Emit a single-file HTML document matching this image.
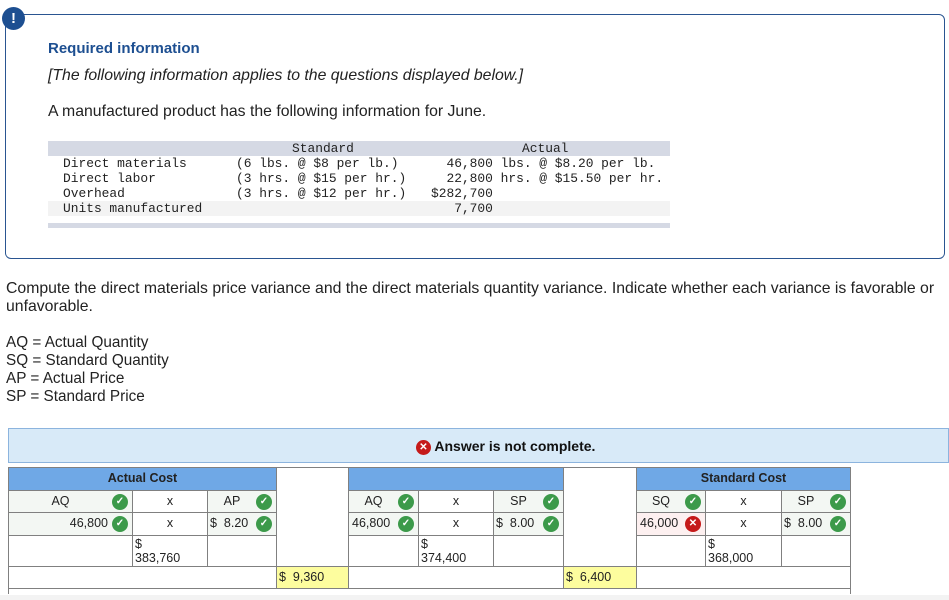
<!DOCTYPE html>
<html><head><style>
body{margin:0;width:949px;height:600px;background:#fff;position:relative;overflow:hidden;font-family:"Liberation Sans",Arial,sans-serif;color:#222}
.a{position:absolute}
.box{left:5px;top:14px;width:938px;height:243px;border:1px solid #2a5591;border-radius:6px}
.bang{left:2px;top:7px;width:23px;height:23px;border-radius:50%;background:#1d4f91;color:#fff;font-weight:bold;font-size:15px;text-align:center;line-height:23px}
.mono{font-family:"Liberation Mono",monospace;font-size:12.9px;white-space:pre;color:#222}
.t{font-size:15.8px;color:#222}
.c{position:absolute;border:1px solid #808080;box-sizing:border-box;font-size:12.5px;line-height:20px}
.hd{background:#6fa8e6;font-weight:bold;text-align:center;color:#222}
.lg{background:#f3f7f3}
.ck{display:inline-block;width:16px;height:16px;border-radius:50%;background:#3c9a4a;color:#fff;font-size:10px;line-height:16px;text-align:center;font-weight:bold;vertical-align:middle;position:absolute;right:4px;top:3px}
.x{background:#c51a1a}
.y{background:#fdfd9e}
</style></head><body>
<div class="a box"></div>
<div class="a bang">!</div>
<div class="a" style="left:48px;top:40px;font-size:15px;font-weight:bold;color:#1d4f91">Required information</div>
<div class="a t" style="left:48px;top:67px;font-style:italic">[The following information applies to the questions displayed below.]</div>
<div class="a t" style="left:48px;top:103px">A manufactured product has the following information for June.</div>
<div class="a" style="left:48px;top:141px;width:622px;height:15px;background:#d5d9e4"></div>
<div class="a" style="left:48px;top:201px;width:622px;height:15px;background:#f3f3f3"></div>
<div class="a" style="left:48px;top:223px;width:622px;height:5px;background:#d5d9e4"></div>
<div class="a mono" style="left:292px;top:141px">Standard</div>
<div class="a mono" style="left:522px;top:141px">Actual</div>
<div class="a mono" style="left:63px;top:156px;line-height:15px">Direct materials
Direct labor
Overhead
Units manufactured</div>
<div class="a mono" style="left:236px;top:156px;line-height:15px">(6 lbs. @ $8 per lb.)
(3 hrs. @ $15 per hr.)
(3 hrs. @ $12 per hr.)</div>
<div class="a mono" style="left:431px;top:156px;line-height:15px">  46,800 lbs. @ $8.20 per lb.
  22,800 hrs. @ $15.50 per hr.
$282,700
   7,700</div>
<div class="a t" style="left:6px;top:280px;width:935px;line-height:18px">Compute the direct materials price variance and the direct materials quantity variance. Indicate whether each variance is favorable or unfavorable.</div>
<div class="a t" style="left:6px;top:334px;line-height:18px;font-size:15.3px">AQ = Actual Quantity<br>SQ = Standard Quantity<br>AP = Actual Price<br>SP = Standard Price</div>
<div class="a" style="left:8px;top:428px;width:941px;height:35px;background:#d8eaf8;border:1px solid #8cb4de;box-sizing:border-box"></div>
<div class="a" style="left:416px;top:438px;font-size:14px;font-weight:bold;color:#111"><span style="display:inline-block;width:15px;height:15px;border-radius:50%;background:#c51a1a;color:#fff;font-size:10px;line-height:15px;text-align:center;vertical-align:1px">✕</span> Answer is not complete.</div>

<div class="c hd" style="left:8px;top:467px;width:269px;height:24px">Actual Cost</div>
<div class="c" style="left:276px;top:467px;width:73px;height:100px"></div>
<div class="c hd" style="left:348px;top:467px;width:216px;height:24px"></div>
<div class="c" style="left:563px;top:467px;width:74px;height:100px"></div>
<div class="c hd" style="left:636px;top:467px;width:215px;height:24px">Standard Cost</div>

<div class="c lg" style="left:8px;top:490px;width:125px;height:23px;text-align:center;padding-right:20px">AQ<span class="ck">✓</span></div>
<div class="c" style="left:132px;top:490px;width:76px;height:23px;text-align:center">x</div>
<div class="c lg" style="left:207px;top:490px;width:70px;height:23px;text-align:center;padding-right:20px">AP<span class="ck">✓</span></div>
<div class="c lg" style="left:348px;top:490px;width:71px;height:23px;text-align:center;padding-right:20px">AQ<span class="ck">✓</span></div>
<div class="c" style="left:418px;top:490px;width:76px;height:23px;text-align:center">x</div>
<div class="c lg" style="left:493px;top:490px;width:71px;height:23px;text-align:center;padding-right:20px">SP<span class="ck">✓</span></div>
<div class="c lg" style="left:636px;top:490px;width:70px;height:23px;text-align:center;padding-right:20px">SQ<span class="ck">✓</span></div>
<div class="c" style="left:705px;top:490px;width:77px;height:23px;text-align:center">x</div>
<div class="c lg" style="left:781px;top:490px;width:70px;height:23px;text-align:center;padding-right:20px">SP<span class="ck">✓</span></div>

<div class="c lg" style="left:8px;top:512px;width:125px;height:24px;text-align:right;padding-right:24px">46,800<span class="ck">✓</span></div>
<div class="c" style="left:132px;top:512px;width:76px;height:24px;text-align:center">x</div>
<div class="c lg" style="left:207px;top:512px;width:70px;height:24px;padding-left:2px">$&nbsp; 8.20<span class="ck">✓</span></div>
<div class="c lg" style="left:348px;top:512px;width:71px;height:24px;padding-left:3px">46,800<span class="ck">✓</span></div>
<div class="c" style="left:418px;top:512px;width:76px;height:24px;text-align:center">x</div>
<div class="c lg" style="left:493px;top:512px;width:71px;height:24px;padding-left:2px">$&nbsp; 8.00<span class="ck">✓</span></div>
<div class="c" style="left:636px;top:512px;width:70px;height:24px;padding-left:3px;background:#fdf0f0">46,000<span class="ck x">✕</span></div>
<div class="c" style="left:705px;top:512px;width:77px;height:24px;text-align:center">x</div>
<div class="c lg" style="left:781px;top:512px;width:70px;height:24px;padding-left:2px">$&nbsp; 8.00<span class="ck">✓</span></div>

<div class="c" style="left:8px;top:535px;width:125px;height:32px"></div>
<div class="c" style="left:132px;top:535px;width:76px;height:32px;line-height:14px;padding:1px 2px">$<br>383,760</div>
<div class="c" style="left:207px;top:535px;width:70px;height:32px"></div>
<div class="c" style="left:348px;top:535px;width:71px;height:32px"></div>
<div class="c" style="left:418px;top:535px;width:76px;height:32px;line-height:14px;padding:1px 2px">$<br>374,400</div>
<div class="c" style="left:493px;top:535px;width:71px;height:32px"></div>
<div class="c" style="left:636px;top:535px;width:70px;height:32px"></div>
<div class="c" style="left:705px;top:535px;width:77px;height:32px;line-height:14px;padding:1px 2px">$<br>368,000</div>
<div class="c" style="left:781px;top:535px;width:70px;height:32px"></div>

<div class="c" style="left:8px;top:566px;width:269px;height:23px"></div>
<div class="c y" style="left:276px;top:566px;width:73px;height:23px;padding-left:2px">$&nbsp; 9,360</div>
<div class="c" style="left:348px;top:566px;width:216px;height:23px"></div>
<div class="c y" style="left:563px;top:566px;width:74px;height:23px;padding-left:2px">$&nbsp; 6,400</div>
<div class="c" style="left:636px;top:566px;width:215px;height:23px"></div>
<div class="a" style="left:8px;top:588px;width:1px;height:6px;background:#808080"></div>
<div class="a" style="left:850px;top:588px;width:1px;height:6px;background:#808080"></div>
<div class="a" style="left:0;top:595px;width:949px;height:5px;background:#f3f3f3"></div>
</body></html>
